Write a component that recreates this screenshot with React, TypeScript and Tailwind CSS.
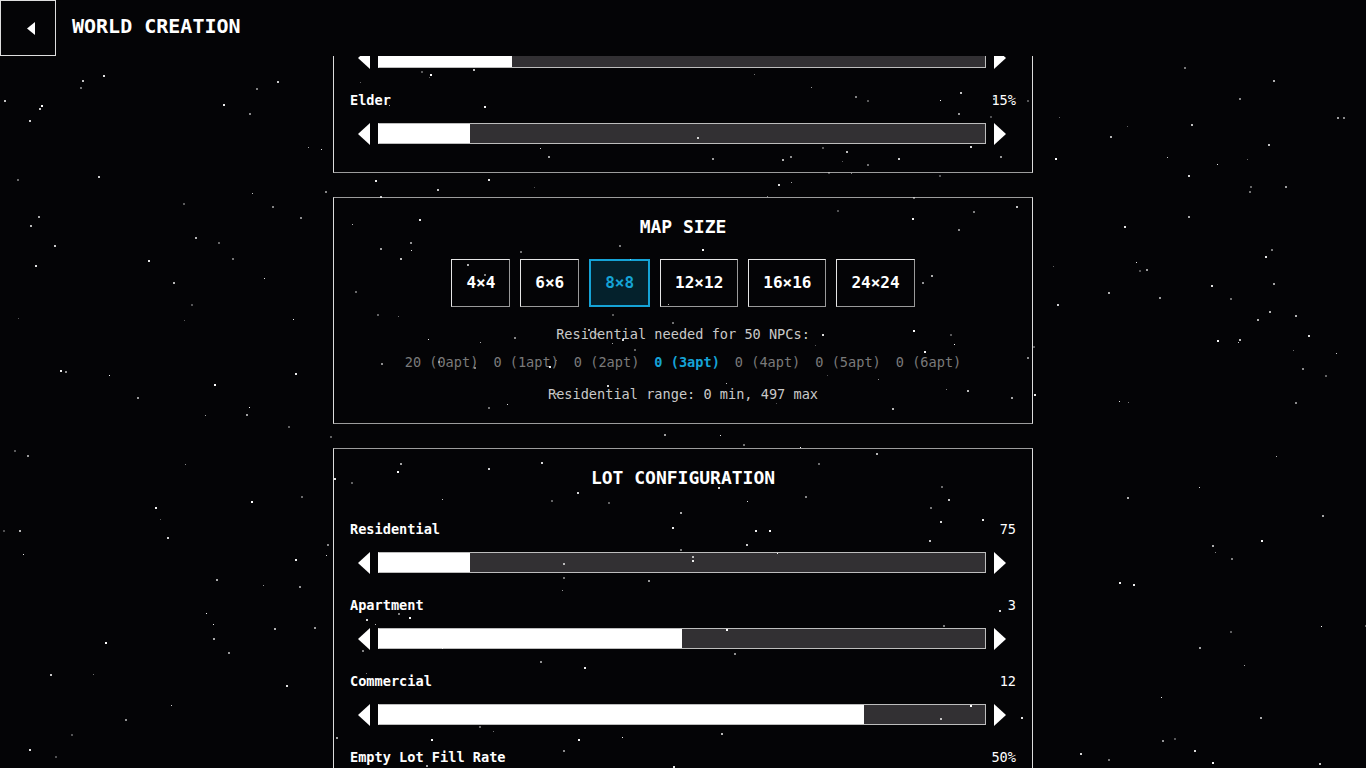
import { useLayoutEffect, useMemo, useRef } from "react";

const mono = "font-['DejaVu_Sans_Mono','Liberation_Mono',monospace]";

type Star = { x: number; y: number; s: number; o: number };

// small seeded rng so the sky is the same on every render
const rng = (seed: number) => () => {
	seed |= 0;
	seed = (seed + 0x6d2b79f5) | 0;
	let t = Math.imul(seed ^ (seed >>> 15), 1 | seed);
	t = (t + Math.imul(t ^ (t >>> 7), 61 | t)) ^ t;
	return ((t ^ (t >>> 14)) >>> 0) / 4294967296;
};

const Starfield = () => {
	const stars = useMemo(() => {
		const r = rng(1337);
		const list: Star[] = [];
		for (let i = 0; i < 320; i++) {
			list.push({
				x: r() * 1366,
				y: 58 + r() * 710,
				s: r() < 0.75 ? 2 : 1,
				o: 0.3 + r() * 0.7,
			});
		}
		return list;
	}, []);
	return (
		<div className="pointer-events-none fixed inset-0 z-20">
			{stars.map((st, i) => (
				<span
					key={i}
					className="absolute bg-white"
					style={{ left: st.x, top: st.y, width: st.s, height: st.s, opacity: st.o }}
				/>
			))}
		</div>
	);
};

const ArrowLeft = () => (
	<svg width="12" height="22" viewBox="0 0 12 22" className="shrink-0">
		<polygon points="12,0 12,22 0,11" fill="#fff" />
	</svg>
);

const ArrowRight = () => (
	<svg width="12" height="22" viewBox="0 0 12 22" className="shrink-0">
		<polygon points="0,0 0,22 12,11" fill="#fff" />
	</svg>
);

const Slider = ({ label, value, pct }: { label: string; value: string; pct: number }) => (
	<div className="flex flex-col">
		<div className="flex h-5 items-center justify-between text-[13.6px] leading-5 text-white">
			<span className="font-bold">{label}</span>
			<span>{value}</span>
		</div>
		<div className="mt-[13px] flex h-[21px] items-center gap-2 pl-2 pr-2.5">
			<ArrowLeft />
			<div className="h-[21px] flex-1 border border-[#bdbdbd] border-l-white bg-[#323033]">
				<div className="h-full bg-white" style={{ width: `${pct}%` }} />
			</div>
			<ArrowRight />
		</div>
	</div>
);

const Panel = ({ title, children, className }: { title: string; children: React.ReactNode; className?: string }) => (
	<section
		className={`w-[700px] border border-x-[#dcdcdc] border-y-[#9c9c9c] px-4 pt-[17px] ${className ?? ""}`}
	>
		<h2 className="h-6 text-center text-[18px] font-bold leading-6 text-white">{title}</h2>
		{children}
	</section>
);

const sizes = ["4×4", "6×6", "8×8", "12×12", "16×16", "24×24"];
const residential = ["20 (0apt)", "0 (1apt)", "0 (2apt)", "0 (3apt)", "0 (4apt)", "0 (5apt)", "0 (6apt)"];

export default function App() {
	const scroller = useRef<HTMLDivElement>(null);

	useLayoutEffect(() => {
		if (scroller.current) scroller.current.scrollTop = 213;
	}, []);

	return (
		<div className={`flex h-screen flex-col overflow-hidden bg-[#040406] ${mono}`}>
			<header className="relative z-30 flex h-14 shrink-0 items-center bg-[#040406]">
				<button className="flex h-14 w-14 items-center justify-center border border-[#dedede] pl-1.5">
					<svg width="8" height="13" viewBox="0 0 8 13">
						<polygon points="8,0 8,13 0,6.5" fill="#fff" />
					</svg>
				</button>
				<h1 className="mb-1 ml-4 text-[20px] font-bold text-white">WORLD CREATION</h1>
			</header>

			<div ref={scroller} className="flex-1 overflow-y-auto [scrollbar-width:none]">
				<div className="flex flex-col items-center gap-6 pt-6 pb-10">
					<Panel title="AGE DISTRIBUTION" className="pb-7">
						<div className="mt-[29px] flex flex-col gap-[22px]">
							<Slider label="Child" value="63%" pct={63} />
							<Slider label="Adult" value="22%" pct={22} />
							<Slider label="Elder" value="15%" pct={15} />
						</div>
					</Panel>

					<Panel title="MAP SIZE" className="pb-[19px]">
						<div className="mt-5 flex justify-center gap-2.5">
							{sizes.map((s) =>
								s === "8×8" ? (
									<button
										key={s}
										className="h-12 border-2 border-[#15a3d6] bg-[#04212c] px-[14px] text-[16px] font-bold text-[#15a3d6]"
									>
										{s}
									</button>
								) : (
									<button
										key={s}
										className="h-12 border border-[#e6e6e6] border-r-[#9a9a9a] border-b-[#9a9a9a] px-[14px] text-[16px] font-bold text-white"
									>
										{s}
									</button>
								),
							)}
						</div>
						<p className="mt-[17px] h-5 text-center text-[13.6px] leading-5 text-[#c9c9c9]">
							Residential needed for 50 NPCs:
						</p>
						<div className="mt-2 flex h-5 justify-center gap-[15px] text-[13.6px] leading-5">
							{residential.map((r) => (
								<span key={r} className={r === "0 (3apt)" ? "font-bold text-[#15a3d6]" : "text-[#7a7a7a]"}>
									{r}
								</span>
							))}
						</div>
						<p className="mt-3 h-5 text-center text-[13.6px] leading-5 text-[#c9c9c9]">
							Residential range: 0 min, 497 max
						</p>
					</Panel>

					<Panel title="LOT CONFIGURATION" className="pb-7">
						<div className="mt-[29px] flex flex-col gap-[22px]">
							<Slider label="Residential" value="75" pct={15} />
							<Slider label="Apartment" value="3" pct={50} />
							<Slider label="Commercial" value="12" pct={80} />
							<Slider label="Empty Lot Fill Rate" value="50%" pct={50} />
						</div>
					</Panel>
				</div>
			</div>

			<Starfield />
		</div>
	);
}
